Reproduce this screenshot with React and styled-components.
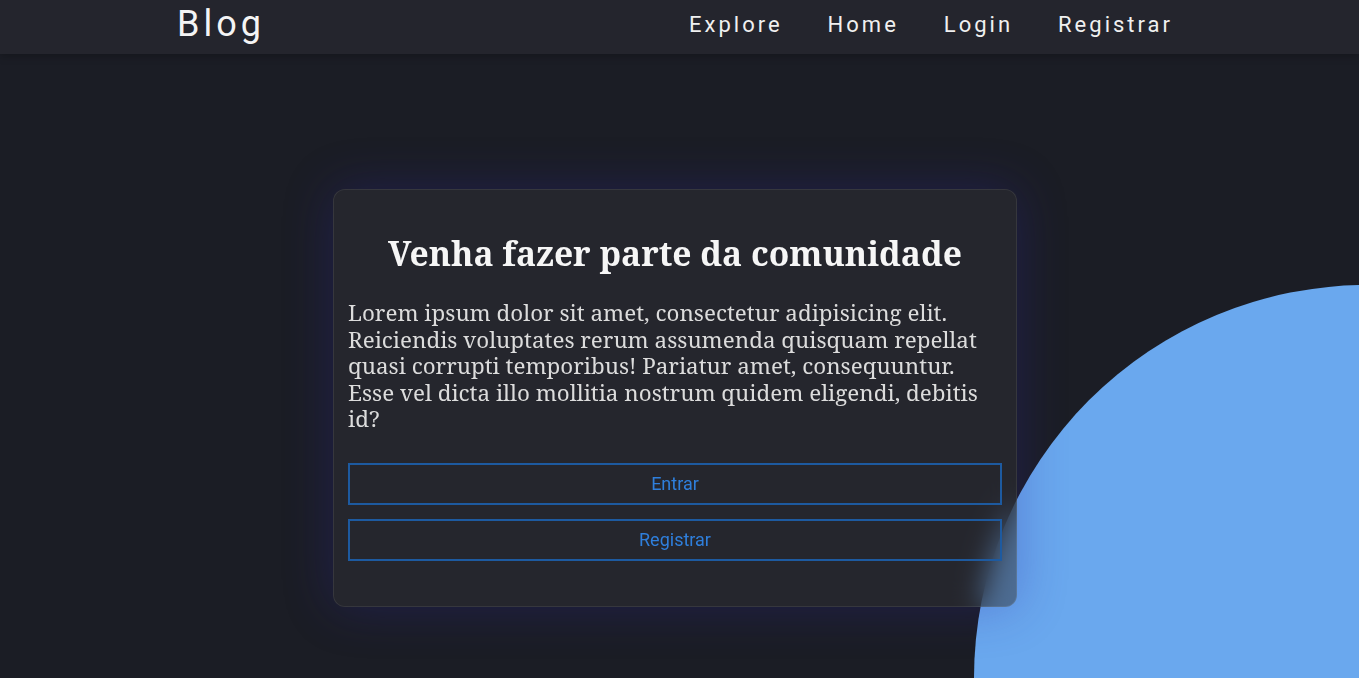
import React from "react";
import styled, { createGlobalStyle } from "styled-components";

const GlobalStyle = createGlobalStyle`
  html, body {
    margin: 0;
    padding: 0;
    height: 100%;
    background: #1b1d25;
    overflow: hidden;
  }
  #root {
    min-height: 100%;
  }
`;

const Page = styled.div`
  position: relative;
  min-height: 678px;
  overflow: hidden;
  background: #1b1d25;
`;

const Circle = styled.div`
  position: absolute;
  left: 974px;
  top: 285px;
  width: 786px;
  height: 786px;
  border-radius: 50%;
  background: #6aa8ee;
  z-index: 0;
`;

const NavBar = styled.header`
  position: relative;
  z-index: 2;
  height: 54px;
  background: #24252d;
  box-shadow: 0 2px 8px rgba(0, 0, 0, 0.25);
`;

const NavInner = styled.div`
  width: 1005px;
  height: 100%;
  margin: 0 auto;
  display: flex;
  align-items: center;
  justify-content: space-between;
  font-family: Roboto, "Liberation Sans", sans-serif;
  color: #f2f2f2;
`;

const Brand = styled.a`
  font-size: 36px;
  letter-spacing: 4px;
  color: #f4f4f4;
  text-decoration: none;
  margin-top: -6px;
`;

const Links = styled.nav`
  display: flex;
  gap: 45px;
  margin-top: -6px;
  margin-right: 9px;
`;

const NavLink = styled.a`
  font-size: 22px;
  letter-spacing: 3px;
  color: #f0f0f0;
  text-decoration: none;
`;

const Main = styled.main`
  position: relative;
  z-index: 1;
  display: flex;
  justify-content: center;
  padding: 135px 9px 0 0;
`;

const Card = styled.section`
  width: 684px;
  height: 418px;
  box-sizing: border-box;
  padding: 0 14px;
  border: 1px solid rgba(255, 255, 255, 0.08);
  border-radius: 12px;
  background: rgba(48, 48, 53, 0.5);
  backdrop-filter: blur(14px);
  box-shadow: 0 0 50px rgba(42, 36, 160, 0.32);
  font-family: "Noto Serif", "DejaVu Serif", serif;
`;

const Title = styled.h1`
  margin: 40px 0 24px;
  text-align: center;
  font-size: 33.6px;
  font-weight: 700;
  color: #f6f6f6;
`;

const Text = styled.p`
  margin: 0 0 30px;
  font-size: 22.4px;
  line-height: 26.5px;
  color: #dcdcdc;
`;

const Actions = styled.div`
  display: flex;
  flex-direction: column;
  gap: 14px;
`;

const Button = styled.button`
  height: 42px;
  width: 100%;
  background: transparent;
  border: 2px solid #1d5aa0;
  color: #2f7fdc;
  font-family: Roboto, "Liberation Sans", sans-serif;
  font-size: 18px;
  cursor: pointer;
`;

export default function App() {
  return (
    <Page>
      <GlobalStyle />
      <Circle />
      <NavBar>
        <NavInner>
          <Brand href="#">Blog</Brand>
          <Links>
            <NavLink href="#">Explore</NavLink>
            <NavLink href="#">Home</NavLink>
            <NavLink href="#">Login</NavLink>
            <NavLink href="#">Registrar</NavLink>
          </Links>
        </NavInner>
      </NavBar>
      <Main>
        <Card>
          <Title>Venha fazer parte da comunidade</Title>
          <Text>
            Lorem ipsum dolor sit amet, consectetur adipisicing elit. Reiciendis
            voluptates rerum assumenda quisquam repellat quasi corrupti
            temporibus! Pariatur amet, consequuntur. Esse vel dicta illo
            mollitia nostrum quidem eligendi, debitis id?
          </Text>
          <Actions>
            <Button>Entrar</Button>
            <Button>Registrar</Button>
          </Actions>
        </Card>
      </Main>
    </Page>
  );
}
